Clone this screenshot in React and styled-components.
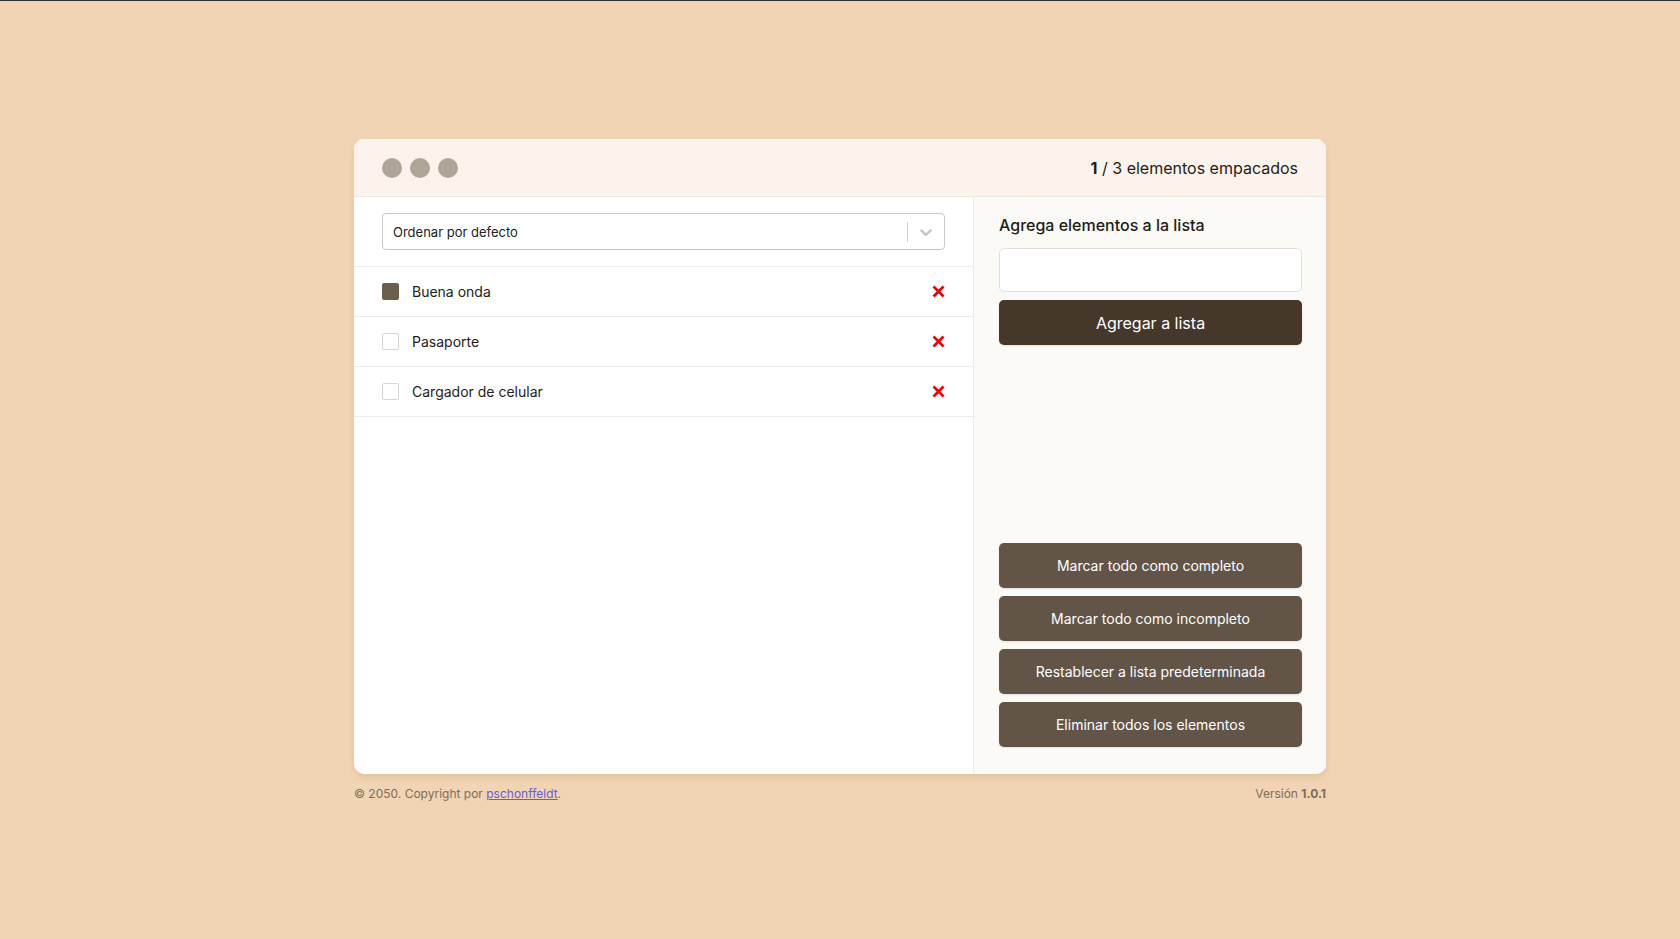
import React, { useState } from "react";
import styled, { createGlobalStyle } from "styled-components";

const GlobalStyle = createGlobalStyle`
  * { box-sizing: border-box; }
  html, body {
    margin: 0;
    padding: 0;
  }
  body {
    background: #f1d4b3;
    border-top: 1px solid #2c2f33;
    font-family: Inter, "Noto Sans", sans-serif;
    color: #1e1a16;
  }
`;

const Page = styled.div`
  height: 938px;
  display: flex;
  flex-direction: column;
  align-items: center;
  justify-content: center;
`;

const Card = styled.main`
  width: 972px;
  height: 635px;
  background: #fff;
  border-radius: 10px;
  box-shadow: 0 4px 6px rgba(120, 80, 40, 0.12);
  display: flex;
  flex-direction: column;
  overflow: hidden;
`;

const Header = styled.header`
  height: 58px;
  flex-shrink: 0;
  background: #fcf4ec;
  border-bottom: 1px solid #efe6dd;
  display: flex;
  align-items: center;
  justify-content: space-between;
  padding: 0 28px;
`;

const Dots = styled.div`
  display: flex;
  gap: 8px;
`;

const Dot = styled.span`
  width: 20px;
  height: 20px;
  border-radius: 50%;
  background: #afa697;
`;

const Counter = styled.p`
  margin: 0;
  font-size: 16px;
  color: #231d17;

  b { font-weight: 700; }
`;

const Body = styled.div`
  flex: 1;
  display: flex;
  min-height: 0;
`;

const ListPanel = styled.section`
  flex: 1;
  border-right: 1px solid #eeeae5;
  display: flex;
  flex-direction: column;
`;

const SortBar = styled.div`
  padding: 16px 28px;
  border-bottom: 1px solid #ececec;
`;

const Select = styled.div`
  height: 37px;
  border: 1px solid #c8c8c8;
  border-radius: 4px;
  display: flex;
  align-items: center;
  padding-left: 10px;
  font-size: 13px;
  color: #222;
  background: #fff;
`;

const SelectValue = styled.span`
  flex: 1;
`;

const Indicator = styled.div`
  display: flex;
  align-items: center;
  height: 100%;
  color: #c4c4c4;

  &::before {
    content: "";
    width: 1px;
    height: 20px;
    background: #d2d2d2;
  }

  svg { margin: 0 8px; }
`;

const Items = styled.ul`
  margin: 0;
  padding: 0;
  list-style: none;
`;

const Item = styled.li`
  height: 50px;
  display: flex;
  align-items: center;
  padding: 0 28px;
  border-bottom: 1px solid #ececec;
  font-size: 14px;
  color: #231d17;
`;

const Check = styled.span`
  width: 17px;
  height: 17px;
  border-radius: 2px;
  border: 1px solid ${(p) => (p.$on ? "#6b5e4d" : "#d6d6d6")};
  background: ${(p) => (p.$on ? "#6b5e4d" : "#fff")};
  margin-right: 13px;
  flex-shrink: 0;
`;

const Label = styled.span`
  flex: 1;
`;

const Remove = styled.button`
  border: 0;
  background: none;
  padding: 0;
  display: flex;
  cursor: pointer;
`;

const SidePanel = styled.aside`
  width: 352px;
  background: #fcfaf7;
  padding: 16px 24px 27px 25px;
  display: flex;
  flex-direction: column;
`;

const Title = styled.h2`
  margin: 0 0 11px;
  font-size: 16px;
  font-weight: 500;
  line-height: 24px;
  color: #231d17;
`;

const Input = styled.input`
  height: 44px;
  border: 1px solid #e3e0dc;
  border-radius: 5px;
  background: #fff;
  margin-bottom: 8px;
  font: inherit;
  padding: 0 12px;
  outline: none;
`;

const Button = styled.button`
  height: 45px;
  width: 100%;
  border: 0;
  border-radius: 5px;
  color: #fff;
  font-family: Inter, "Noto Sans", sans-serif;
  font-size: ${(p) => (p.$primary ? "16px" : "14px")};
  background: ${(p) => (p.$primary ? "#46372b" : "#625548")};
  box-shadow: 0 1px 2px rgba(0, 0, 0, 0.1);
  cursor: pointer;
`;

const Actions = styled.div`
  margin-top: auto;
  display: flex;
  flex-direction: column;
  gap: 8px;
`;

const Footer = styled.footer`
  width: 972px;
  margin-top: 12px;
  display: flex;
  justify-content: space-between;
  font-size: 12px;
  color: #7d6d5d;

  a { color: #6b5bd6; }
  b { font-weight: 700; }
`;

const Cross = () => (
  <svg width="13" height="13" viewBox="0 0 13 13">
    <path d="M1.5 1.5 L11.5 11.5 M11.5 1.5 L1.5 11.5" stroke="#ee0000" strokeWidth="2.6" />
  </svg>
);

const Chevron = () => (
  <svg width="20" height="20" viewBox="0 0 20 20">
    <path
      fill="currentColor"
      d="M4.516 7.548c0.436-0.446 1.043-0.481 1.576 0l3.908 3.747 3.908-3.747c0.533-0.481 1.141-0.446 1.574 0 0.436 0.445 0.408 1.197 0 1.615-0.406 0.418-4.695 4.502-4.695 4.502-0.217 0.223-0.502 0.335-0.787 0.335s-0.57-0.112-0.789-0.335c0 0-4.287-4.084-4.695-4.502s-0.436-1.170 0-1.615z"
    />
  </svg>
);

const initial = [
  { id: 1, name: "Buena onda", packed: true },
  { id: 2, name: "Pasaporte", packed: false },
  { id: 3, name: "Cargador de celular", packed: false },
];

export default function App() {
  const [items] = useState(initial);
  const packed = items.filter((i) => i.packed).length;

  return (
    <Page>
      <GlobalStyle />
      <Card>
        <Header>
          <Dots>
            <Dot />
            <Dot />
            <Dot />
          </Dots>
          <Counter>
            <b>{packed}</b> / {items.length} elementos empacados
          </Counter>
        </Header>
        <Body>
          <ListPanel>
            <SortBar>
              <Select>
                <SelectValue>Ordenar por defecto</SelectValue>
                <Indicator>
                  <Chevron />
                </Indicator>
              </Select>
            </SortBar>
            <Items>
              {items.map((item) => (
                <Item key={item.id}>
                  <Check $on={item.packed} />
                  <Label>{item.name}</Label>
                  <Remove>
                    <Cross />
                  </Remove>
                </Item>
              ))}
            </Items>
          </ListPanel>
          <SidePanel>
            <Title>Agrega elementos a la lista</Title>
            <Input />
            <Button $primary>Agregar a lista</Button>
            <Actions>
              <Button>Marcar todo como completo</Button>
              <Button>Marcar todo como incompleto</Button>
              <Button>Restablecer a lista predeterminada</Button>
              <Button>Eliminar todos los elementos</Button>
            </Actions>
          </SidePanel>
        </Body>
      </Card>
      <Footer>
        <span>
          © 2050. Copyright por <a href="#">pschonffeldt</a>.
        </span>
        <span>
          Versión <b>1.0.1</b>
        </span>
      </Footer>
    </Page>
  );
}
